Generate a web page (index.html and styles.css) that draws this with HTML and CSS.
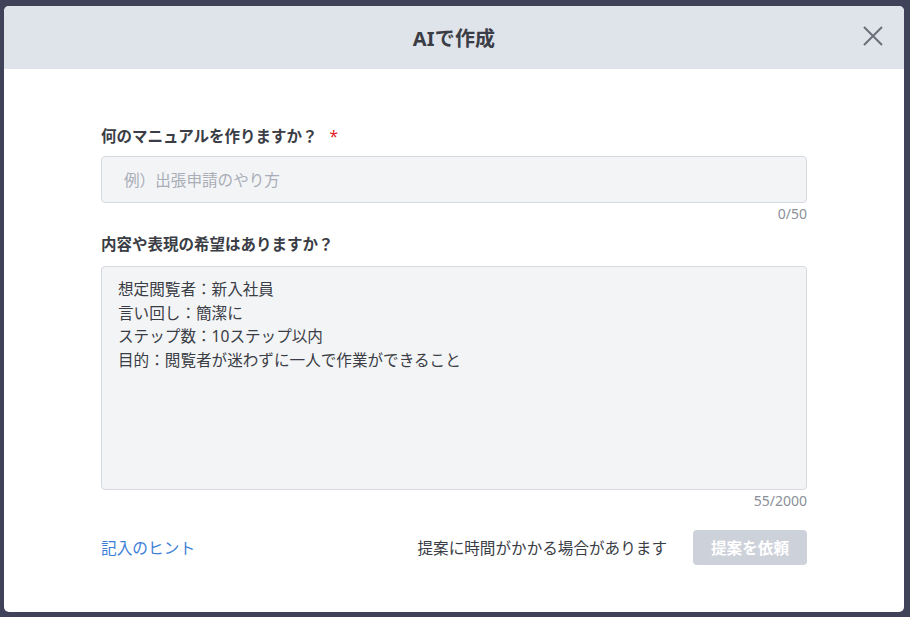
FILE: index.html
```html
<!DOCTYPE html>
<html lang="ja">
<head>
<meta charset="utf-8">
<title>AIで作成</title>
<link rel="stylesheet" href="styles.css">
</head>
<body>
<div class="overlay">
  <div class="modal">
    <header class="modal-header">
      <h1 class="modal-title">AIで作成</h1>
      <button class="close-btn" aria-label="閉じる">
        <svg width="20" height="20" viewBox="0 0 20 20"><path d="M1 1 L19 19 M19 1 L1 19" stroke="#6b6f7a" stroke-width="2" fill="none"/></svg>
      </button>
    </header>
    <div class="modal-body">
      <label class="field-label">何のマニュアルを作りますか？<span class="req">*</span></label>
      <div class="input-box"><span class="placeholder">例）出張申請のやり方</span></div>
      <div class="counter">0/50</div>
      <label class="field-label second">内容や表現の希望はありますか？</label>
      <div class="textarea-box">
        <div>想定閲覧者：新入社員</div>
        <div>言い回し：簡潔に</div>
        <div>ステップ数：10ステップ以内</div>
        <div>目的：閲覧者が迷わずに一人で作業ができること</div>
      </div>
      <div class="counter">55/2000</div>
      <div class="footer">
        <a class="hint-link">記入のヒント</a>
        <div class="footer-right">
          <span class="note">提案に時間がかかる場合があります</span>
          <button class="submit-btn">提案を依頼</button>
        </div>
      </div>
    </div>
  </div>
</div>
</body>
</html>
```
FILE: styles.css
```css
html, body {
  margin: 0;
  padding: 0;
  height: 100%;
}
body {
  background: #3f4259;
  font-family: "Noto Sans", "Noto Sans CJK JP", sans-serif;
  color: #3a3d45;
}
.overlay {
  padding: 6px 6px 5px 4px;
  height: 617px;
  box-sizing: border-box;
}
.modal {
  width: 900px;
  height: 606px;
  background: #ffffff;
  border-radius: 5px;
  overflow: hidden;
  display: flex;
  flex-direction: column;
}
.modal-header {
  height: 63px;
  background: #dfe3ea;
  display: flex;
  align-items: center;
  justify-content: center;
  position: relative;
  flex-shrink: 0;
}
.modal-title {
  margin: 0;
  font-size: 20px;
  font-weight: 700;
  color: #3a3d45;
  letter-spacing: 0.2px;
}
.close-btn {
  position: absolute;
  right: 21px;
  top: 20px;
  width: 20px;
  height: 20px;
  padding: 0;
  border: 0;
  background: transparent;
  display: flex;
}
.modal-body {
  padding: 56px 97px 0 97px;
  display: flex;
  flex-direction: column;
}
.field-label {
  display: block;
  font-size: 15.5px;
  font-weight: 700;
  line-height: 22px;
  color: #3a3d45;
}
.field-label.second {
  margin-top: 10px;
}
.req {
  color: #e5202a;
  margin-left: 12px;
  font-weight: 400;
}
.input-box {
  margin-top: 9px;
  height: 47px;
  box-sizing: border-box;
  border: 1px solid #d6d9df;
  border-radius: 4px;
  background: #f3f4f6;
  padding: 0 22px;
  display: flex;
  align-items: center;
}
.placeholder {
  font-size: 15.6px;
  color: #a9adb7;
}
.counter {
  text-align: right;
  font-size: 14px;
  line-height: 18px;
  color: #8b8f98;
  margin-top: 2px;
}
.textarea-box {
  margin-top: 11px;
  height: 224px;
  box-sizing: border-box;
  border: 1px solid #d6d9df;
  border-radius: 4px;
  background: #f3f4f6;
  padding: 11px 16px 10px;
  font-size: 15.6px;
  line-height: 23.7px;
  color: #3a3d45;
}
.footer {
  margin-top: 20px;
  display: flex;
  align-items: center;
  justify-content: space-between;
}
.hint-link {
  font-size: 15.7px;
  color: #3d7fd6;
  cursor: pointer;
}
.footer-right {
  display: flex;
  align-items: center;
  gap: 26px;
}
.note {
  font-size: 15.6px;
  color: #3a3d45;
}
.submit-btn {
  width: 114px;
  height: 35px;
  border: 0;
  border-radius: 4px;
  background: #cdd1d9;
  color: #ffffff;
  font-family: inherit;
  font-size: 15.6px;
  font-weight: 700;
  padding: 0;
}
```
